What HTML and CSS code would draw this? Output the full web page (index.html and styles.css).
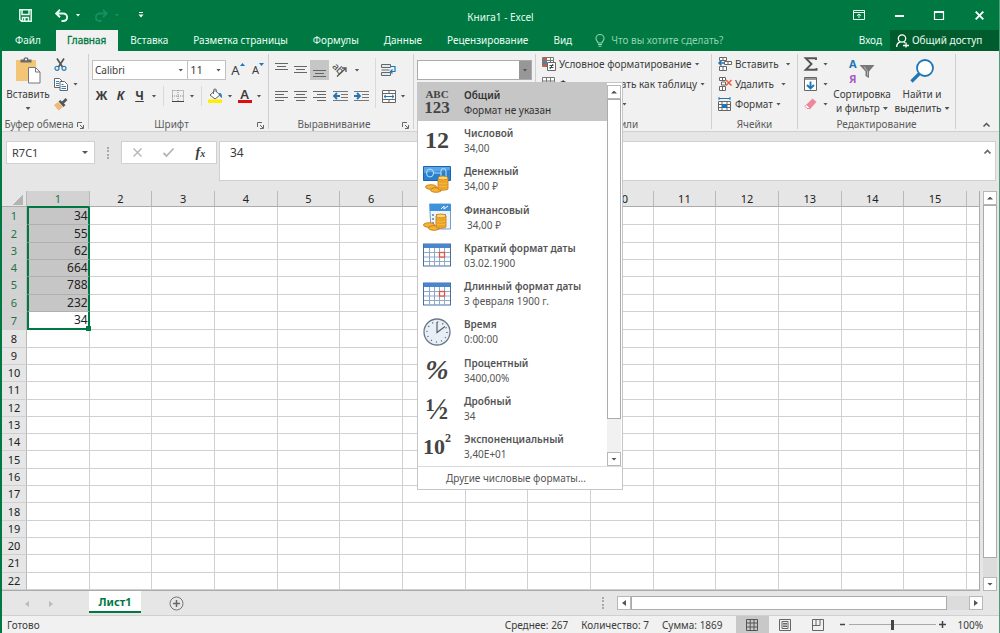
FILE: index.html
```html
<!DOCTYPE html>
<html lang="ru">
<head>
<meta charset="utf-8">
<meta name="viewport" content="width=device-width, initial-scale=1">
<title>Книга1 - Excel</title>
<link rel="stylesheet" href="styles.css">
</head>
<body>
<svg class="defs" aria-hidden="true">
  <symbol id="i-launch" viewBox="0 0 7 7"><path d="M.5 5V.5H5M3 3l3 3M6.500 3v3.500H3" fill="none" stroke="#666"/></symbol>
  <symbol id="i-cal" viewBox="0 0 28 24"><rect x=".5" y="1" width="27" height="22" fill="#fff" stroke="#4a6f9f"/><rect x="1" y="1" width="26" height="4" fill="#4a86cf"/><path d="M1 9.500h26M1 14h26M1 18.500h26M6.500 5v18M11.500 5v18M16.500 5v18M21.500 5v18" stroke="#8ba9cf" fill="none"/><rect x="16.500" y="9.500" width="5" height="4.500" fill="#fff" stroke="#e0563c" stroke-width="1.300"/></symbol>
  <symbol id="i-coins" viewBox="0 0 26 18"><g fill="#f7b334" stroke="#bd7415" stroke-width=".8"><ellipse cx="7" cy="12" rx="5.500" ry="2.300"/><ellipse cx="12" cy="15" rx="5.500" ry="2.300"/><path d="M14 3v11c0 1.500 10 1.500 10 0V3z"/><path d="M14 6c0 1.500 10 1.500 10 0M14 9c0 1.500 10 1.500 10 0M14 12c0 1.500 10 1.500 10 0" fill="none" stroke="#d98e1c"/><ellipse cx="19" cy="3" rx="5" ry="2" fill="#ffd772"/></g></symbol>
  <symbol id="i-left" viewBox="0 0 13 12"><path d="M0 1.500h13M0 4.500h9M0 7.500h13M0 10.500h9" stroke="#666"/></symbol>
  <symbol id="i-center" viewBox="0 0 13 12"><path d="M0 1.500h13M2 4.500h9M0 7.500h13M2 10.500h9" stroke="#666"/></symbol>
  <symbol id="i-right" viewBox="0 0 13 12"><path d="M0 1.500h13M4 4.500h9M0 7.500h13M4 10.500h9" stroke="#666"/></symbol>
</svg>

<div class="app">
  <header class="titlebar">
    <div class="quick">
      <button class="q-save" aria-label="Сохранить"><svg width="13" height="13" viewBox="0 0 13 13"><path d="M.8.8h11.400v11.400H2.500L.8 10.500zM3 1v4.500h7V1M3.500 12V8.500h6V12" fill="none" stroke="#e6fff3" stroke-width="1.500"/><path d="M5 9h1.500v3H5z" fill="#e6fff3"/></svg></button>
      <button class="q-undo" aria-label="Отменить"><svg width="14" height="13" viewBox="0 0 14 13"><path d="M5 .8L1.200 4.500 5 8.200M1.500 4.500H8c5.500 0 5.500 7.500 0 7.500H6.500" fill="none" stroke="#e6fff3" stroke-width="1.900"/></svg></button>
      <button class="q-drop" aria-label="Список отмены"><i class="caret"></i></button>
      <button class="q-redo" aria-label="Вернуть"><svg width="14" height="13" viewBox="0 0 14 13"><path d="M9 .8l3.800 3.700L9 8.200M12.500 4.500H6c-5.500 0-5.500 7.500 0 7.500h1.500" fill="none" stroke="#169063" stroke-width="1.800"/></svg></button>
      <button class="q-drop dim" aria-label="Список возврата"><i class="caret"></i></button>
      <button class="q-more" aria-label="Настройка панели"><svg width="6" height="6" viewBox="0 0 6 6"><path d="M1 .5h4" stroke="#fff"/><path d="M.5 2.500h5L3 5.500z" fill="#fff"/></svg></button>
    </div>
    <h1>Книга1 - Excel</h1>
    <div class="window-buttons">
      <button aria-label="Параметры ленты"><svg width="12" height="10" viewBox="0 0 12 10"><path d="M.5.5h11v9H.5zM1 2.500h10M6 8V4M4 5.700L6 4l2 1.700" fill="none" stroke="#e8fff4"/></svg></button>
      <button aria-label="Свернуть"><svg width="9" height="10" viewBox="0 0 9 10"><path d="M0 6h9" stroke="#fff" stroke-width="2"/></svg></button>
      <button aria-label="Развернуть"><svg width="10" height="9" viewBox="0 0 10 9"><path d="M.5.500h9v8h-9zM0 1.500h10" fill="none" stroke="#fff" stroke-width="1.200"/></svg></button>
      <button aria-label="Закрыть"><svg width="9" height="9" viewBox="0 0 9 9"><path d="M.7.7l7.600 7.600M8.300.7L.7 8.300" stroke="#fff" stroke-width="1.900"/></svg></button>
    </div>
  </header>

  <nav class="tabs">
    <a href="#file" class="tab file">Файл</a>
    <a href="#home" class="tab active" aria-current="page">Главная</a>
    <a href="#insert" class="tab">Вставка</a>
    <a href="#layout" class="tab">Разметка страницы</a>
    <a href="#formulas" class="tab">Формулы</a>
    <a href="#data" class="tab">Данные</a>
    <a href="#review" class="tab">Рецензирование</a>
    <a href="#view" class="tab">Вид</a>
    <button class="tellme"><svg width="10" height="13" viewBox="0 0 10 13"><path d="M3 9C3 7.500 1 6.500 1 4.500a4 4 0 018 0C9 6.500 7 7.500 7 9zM3 10.500h4M3.500 12.300h3" fill="none" stroke="#8fd3b0" stroke-width="1.100"/></svg>Что вы хотите сделать?</button>
    <a href="#login" class="login">Вход</a>
    <button class="share"><svg width="13" height="14" viewBox="0 0 13 14"><circle cx="6" cy="4.500" r="3.700" fill="none" stroke="#fff" stroke-width="1.300"/><path d="M.7 13c0-3 1.500-4.500 3.500-5M8 8l1 1M7 11.500h6M10 8.500v5" fill="none" stroke="#fff" stroke-width="1.300"/></svg>Общий доступ</button>
  </nav>

  <section class="ribbon" aria-label="Лента">
    <div class="group g-clip">
      <div class="body">
        <button class="big paste"><svg width="26" height="27" viewBox="0 0 26 27"><path d="M1 3h20v21H1z" fill="#f3c577"/><path d="M5.500 5.500v-3h3C8.500-.5 13.500-.5 13.500 2.500h3v3z" fill="#6a6a6a"/><circle cx="11" cy="2.500" r="1" fill="#fff"/><path d="M13.500 10.500h7l4.500 4.500v11H13.500z" fill="#fff" stroke="#777"/><path d="M20.500 10.500V15H25" fill="none" stroke="#777"/></svg><span>Вставить</span><i class="caret"></i></button>
        <div class="stack">
          <button aria-label="Вырезать"><svg width="13" height="13" viewBox="0 0 13 13"><path d="M3 .5l5.500 8.500M10 .5L4.500 9" stroke="#555" stroke-width="1.700"/><circle cx="3" cy="10.300" r="2" fill="none" stroke="#2f7fb8" stroke-width="1.200"/><circle cx="10" cy="10.300" r="2" fill="none" stroke="#2f7fb8" stroke-width="1.200"/></svg></button>
          <button aria-label="Копировать"><svg width="14" height="13" viewBox="0 0 14 13"><path d="M.5.500h5L8 3v6.500H.5z" fill="#fff" stroke="#666"/><path d="M2 3.500h3M2 5.500h3M2 7.500h3" stroke="#2f7fb8"/><path d="M6 3.500h4.500l3 3v6H6z" fill="#fff" stroke="#666"/><path d="M7.500 6.500h2M7.500 8.500h4.500M7.500 10.500h4.500" stroke="#2f7fb8"/></svg><i class="caret"></i></button>
          <button aria-label="Формат по образцу"><svg width="14" height="13" viewBox="0 0 14 13"><path d="M0 7l4-3 5 5-4.500 3.500z" fill="#f0b878"/><path d="M4.500 3.500L6.300 2l5.200 5L9.500 9z" fill="#555"/><path d="M8.500 5L12.500 1" stroke="#555" stroke-width="2.600"/></svg></button>
        </div>
      </div>
      <footer>Буфер обмена<button class="launch" aria-label="Параметры буфера"><svg width="7" height="7"><use href="#i-launch"/></svg></button></footer>
    </div>

    <div class="group g-font">
      <div class="body rows">
        <div class="row">
          <span class="combo font-name"><select aria-label="Шрифт"><option>Calibri</option></select><i class="caret"></i></span>
          <span class="combo font-size"><select aria-label="Размер шрифта"><option>11</option></select><i class="caret"></i></span>
          <button class="tool grow first-grow" aria-label="Увеличить размер"><span>A</span><svg width="5" height="3" viewBox="0 0 5 3"><path d="M0 3L2.500 0 5 3z" fill="#2076b4"/></svg></button>
          <button class="tool grow small" aria-label="Уменьшить размер"><span>A</span><svg width="5" height="3" viewBox="0 0 5 3"><path d="M0 0L2.500 3 5 0z" fill="#2076b4"/></svg></button>
        </div>
        <div class="row">
          <button class="tool bold">Ж</button>
          <button class="tool bold italic">К</button>
          <button class="tool bold under">Ч</button>
          <button class="drop" aria-label="Подчёркивание"><i class="caret"></i></button>
          <i class="vsep"></i>
          <button class="tool" aria-label="Границы"><svg width="12" height="12" viewBox="0 0 12 12"><path d="M.5.500h11v11M.5.500v11M6 0v11M0 6h12" fill="none" stroke="#888" stroke-dasharray="1 1"/><path d="M0 11.500h12" stroke="#444"/></svg></button>
          <button class="drop" aria-label="Виды границ"><i class="caret"></i></button>
          <i class="vsep"></i>
          <button class="tool" aria-label="Заливка"><svg width="15" height="14" viewBox="0 0 15 14"><path d="M2 6l5-4.500L12 6l-5 4z" fill="#fff" stroke="#666"/><path d="M5.500 5V1.500a1.500 1.500 0 013 0V3" fill="none" stroke="#666"/><path d="M11 4c3 0 3 2 3 5-1.500-.5-2-2-3-3z" fill="#2f7fb8"/><path d="M0 10.500h14V14H0z" fill="#ffee00"/></svg></button>
          <button class="drop" aria-label="Цвет заливки"><i class="caret"></i></button>
          <button class="tool" aria-label="Цвет шрифта"><span class="fontcolor">A</span></button>
          <button class="drop" aria-label="Выбор цвета"><i class="caret"></i></button>
        </div>
      </div>
      <footer>Шрифт<button class="launch" aria-label="Параметры шрифта"><svg width="7" height="7"><use href="#i-launch"/></svg></button></footer>
    </div>

    <div class="group g-align">
      <div class="body">
        <div class="rows">
          <div class="row">
            <button class="tool" aria-label="По верхнему краю"><svg width="13" height="18" viewBox="0 0 13 18"><path d="M0 2.500h13M2 5.500h9M0 8.500h13" stroke="#666"/></svg></button>
            <button class="tool" aria-label="По середине"><svg width="13" height="18" viewBox="0 0 13 18"><path d="M0 5.500h13M2 8.500h9M0 11.500h13" stroke="#666"/></svg></button>
            <button class="tool pressed" aria-pressed="true" aria-label="По нижнему краю"><svg width="13" height="18" viewBox="0 0 13 18"><path d="M0 9.500h13M2 12.500h9M0 15.500h13" stroke="#666"/></svg></button>
            <button class="tool wide" aria-label="Ориентация"><svg width="15" height="14" viewBox="0 0 15 14"><text x="-1" y="9" transform="rotate(45 5 6)" class="ab">ab</text><path d="M4 13.500L12 6M13 9V5H9" fill="none" stroke="#555" stroke-width="1.300"/></svg></button>
            <button class="drop" aria-label="Виды ориентации"><i class="caret"></i></button>
          </div>
          <div class="row">
            <button class="tool" aria-label="По левому краю"><svg width="13" height="12"><use href="#i-left"/></svg></button>
            <button class="tool" aria-label="По центру"><svg width="13" height="12"><use href="#i-center"/></svg></button>
            <button class="tool" aria-label="По правому краю"><svg width="13" height="12"><use href="#i-right"/></svg></button>
            <button class="tool wide" aria-label="Уменьшить отступ"><svg width="15" height="12" viewBox="0 0 15 12"><path d="M0 1.500h15M8 4.500h7M8 7.500h7M0 10.500h15" stroke="#777"/><path d="M7 6H1.500M4 3L1 6l3 3" fill="none" stroke="#2076b4" stroke-width="1.800"/></svg></button>
            <button class="tool" aria-label="Увеличить отступ"><svg width="15" height="12" viewBox="0 0 15 12"><path d="M0 1.500h15M8 4.500h7M8 7.500h7M0 10.500h15" stroke="#777"/><path d="M0 6h5.500M3 3l3 3-3 3" fill="none" stroke="#2076b4" stroke-width="1.800"/></svg></button>
          </div>
        </div>
        <i class="vsep tall"></i>
        <div class="rows">
          <div class="row">
            <button class="tool" aria-label="Перенести текст"><svg width="15" height="14" viewBox="0 0 15 14"><path d="M.5 1.500h9v3h-9zM.5 9.500h9v3h-9zM.5 7h8" fill="#dcecf7" stroke="#666"/><path d="M9 3.500h5v5H9.500M11.500 6.500l-2 2 2 2" fill="none" stroke="#2076b4" stroke-width="1.200"/></svg></button>
          </div>
          <div class="row">
            <button class="tool" aria-label="Объединить"><svg width="14" height="13" viewBox="0 0 14 13"><path d="M.5.500h13v12H.5zM.5 3.500h13M.5 9.500h13M7 .5v3M7 9.500v3" fill="#fff" stroke="#666"/><path d="M2 6.500h10M4 4.800L2 6.500l2 1.700M10 4.800l2 1.700-2 1.700" fill="none" stroke="#2076b4"/></svg></button>
            <button class="drop" aria-label="Виды объединения"><i class="caret"></i></button>
          </div>
        </div>
      </div>
      <footer>Выравнивание<button class="launch" aria-label="Параметры выравнивания"><svg width="7" height="7"><use href="#i-launch"/></svg></button></footer>
    </div>

    <div class="group g-number">
      <div class="body rows">
        <div class="format-box">
          <input type="text" aria-label="Числовой формат">
          <button aria-label="Открыть список форматов" aria-expanded="true"><i class="caret"></i></button>
        </div>
      </div>
      <div class="format-menu">
        <div class="format-scroll">
          <ul role="listbox" aria-label="Числовые форматы">
            <li role="option" aria-selected="true" class="selected"><span class="pic abc">ABC<span>123</span></span><span><b>Общий</b><small>Формат не указан</small></span></li>
            <li role="option"><span class="pic num">12</span><span><b>Числовой</b><small>34,00</small></span></li>
            <li role="option"><span class="pic"><svg width="28" height="28" viewBox="0 0 28 28"><path d="M.5 1.500h27v14H.5z" fill="#2a7fd0" stroke="#1d62aa"/><path d="M1 2h26v3L1 8z" fill="#58a6e6"/><ellipse cx="7" cy="8" rx="3.500" ry="4" fill="none" stroke="#b9e0fa"/><path d="M10 8h8M18 12V6a2.500 2.500 0 015 0v6" fill="none" stroke="#b9e0fa"/><use href="#i-coins" x="1" y="10" width="26" height="18"/></svg></span><span><b>Денежный</b><small>34,00 ₽</small></span></li>
            <li role="option"><span class="pic"><svg width="28" height="28" viewBox="0 0 28 28"><path d="M6.500 1h21v25H8z" fill="#eef4fb" stroke="#6f9fd0"/><path d="M7 1h21v7H7z" fill="#3e92dc"/><path d="M18 6l3-3v3l4-3" fill="none" stroke="#fff"/><path d="M9 12h16M9 16h16M9 20h16" stroke="#8a9bb0" stroke-width="2" stroke-dasharray="2 2"/><use href="#i-coins" x="-1" y="10" width="26" height="18"/></svg></span><span><b>Финансовый</b><small class="indent">34,00 ₽</small></span></li>
            <li role="option"><span class="pic"><svg width="28" height="24"><use href="#i-cal"/></svg></span><span><b>Краткий формат даты</b><small>03.02.1900</small></span></li>
            <li role="option"><span class="pic"><svg width="28" height="24"><use href="#i-cal"/></svg></span><span><b>Длинный формат даты</b><small>3 февраля 1900 г.</small></span></li>
            <li role="option"><span class="pic"><svg width="28" height="28" viewBox="0 0 28 28"><circle cx="14" cy="14" r="13" fill="#e9eff6" stroke="#69788a" stroke-width="1.300"/><circle cx="14" cy="14" r="10" fill="none" stroke="#5e6b7c" stroke-width="1.500" stroke-dasharray="1 4.236"/><path d="M14 4v10.500l8-6" fill="none" stroke="#56606e" stroke-width="1.200"/></svg></span><span><b>Время</b><small>0:00:00</small></span></li>
            <li role="option"><span class="pic pct">%</span><span><b>Процентный</b><small>3400,00%</small></span></li>
            <li role="option"><span class="pic half">½</span><span><b>Дробный</b><small>34</small></span></li>
            <li role="option"><span class="pic exp">10<sup>2</sup></span><span><b>Экспоненциальный</b><small>3,40E+01</small></span></li>
          </ul>
          <div class="vscroll">
            <button aria-label="Вверх"><i class="caret up"></i></button>
            <div class="thumb"></div><div class="rest menu-rest"></div>
            <button aria-label="Вниз"><i class="caret"></i></button>
          </div>
        </div>
        <button class="more-formats"><span>Дру<u>г</u>ие числовые форматы...</span></button>
      </div>
    </div>

    <div class="group g-styles">
      <div class="body lines">
        <button><svg width="14" height="14" viewBox="0 0 14 14"><path d="M.5.500h11v9H.5zM.5 3.500h11M.5 6.500h11M4.500.500v9M8.500.500v9" fill="#fff" stroke="#777"/><path d="M1 1h3.500v2.500H1zM1 7h3v2.500H1z" fill="#d5583a"/><path d="M1 4h3v2.500H1z" fill="#3f83bd"/><path d="M5.500 5.500h8v8h-8z" fill="#fff" stroke="#666"/><path d="M7.500 8.500h4M7.500 10.500h4M11 7l-3 5" stroke="#444"/></svg>Условное форматирование<i class="caret"></i></button>
        <button><svg width="14" height="14" viewBox="0 0 14 14"><path d="M.5.500h12v11H.5zM.5 4h12M.5 7.500h12M4.500.500v11M8.500.500v11" fill="#fff" stroke="#777"/></svg>Форматировать как таблицу<i class="caret"></i></button>
        <button><svg width="14" height="14" viewBox="0 0 14 14"><path d="M.5.500h12v11H.5zM.5 4h12M4.500.500v11" fill="#fff" stroke="#777"/></svg>Стили ячеек<i class="caret"></i></button>
      </div>
      <footer>Стили</footer>
    </div>

    <div class="group g-cells">
      <div class="body lines">
        <button><svg width="14" height="14" viewBox="0 0 14 14"><path d="M1.500.500h7v3h-7zM5 .5v3M1.500 9.500h7v4h-7zM5 9.500v4M6.500 4.500h7v3h-7zM10 4.500v3" fill="#fff" stroke="#666"/><path d="M6 6H1M3.500 3.500L1 6l2.500 2.500" fill="none" stroke="#2076b4" stroke-width="1.500"/></svg>Вставить<i class="caret far"></i></button>
        <button><svg width="14" height="14" viewBox="0 0 14 14"><path d="M1.500.500h6v3h-6zM4.500.500v3M1.500 9.500h6v4h-6zM4.500 9.500v4M3.500 5h4v3h-4z" fill="#fff" stroke="#666"/><path d="M8 3l5.500 5.500M13.500 3L8 8.500" stroke="#e2603f" stroke-width="1.500"/></svg>Удалить<i class="caret far"></i></button>
        <button><svg width="14" height="14" viewBox="0 0 14 14"><path d="M1 1.500h11M1 0v3M12 0v3" stroke="#2076b4"/><path d="M.5 4.500h12v9H.5zM.5 7.500h12M.5 10.500h12M4 4.500v9M9 4.500v9" fill="#fff" stroke="#666"/><path d="M4 7h5v4H4z" fill="#2076b4"/></svg>Формат<i class="caret"></i></button>
      </div>
      <footer>Ячейки</footer>
    </div>

    <div class="group g-edit">
      <div class="body">
        <div class="lines icons">
          <button aria-label="Сумма"><svg width="14" height="14" viewBox="0 0 14 14"><path d="M12 3V1.200H1.700L7.500 7l-5.800 5.800H12.500V11" fill="none" stroke="#555" stroke-width="1.900"/></svg><i class="caret"></i></button>
          <button aria-label="Заполнить"><svg width="13" height="14" viewBox="0 0 13 14"><path d="M.5.500h12v13H.5z" fill="#fff" stroke="#666"/><path d="M1 1h11v2H1z" fill="#999"/><path d="M6.500 4.500v7M3 8l3.500 3.500L10 8" fill="none" stroke="#2076b4" stroke-width="1.900"/></svg><i class="caret"></i></button>
          <button aria-label="Очистить"><svg width="13" height="12" viewBox="0 0 13 12"><path d="M2.500 6.500L8.500.500l4 3.500-6 6.500z" fill="#f0869a"/><path d="M2.500 6.500l4 4H3L1 8.500z" fill="#fff" stroke="#f0869a"/></svg><i class="caret"></i></button>
        </div>
        <button class="big sort"><svg width="26" height="26" viewBox="0 0 26 26"><text x="0" y="10" class="sort-a">А</text><text x="0" y="25" class="sort-z">Я</text><path d="M10.500 7h15l-5.500 6.500V20l-3.500-2v-4.500z" fill="#777"/><path d="M15 8.500l3.500 5v4" fill="none" stroke="#bbb"/></svg><span>Сортировка<br>и фильтр<i class="caret"></i></span></button>
        <button class="big find"><svg width="24" height="26" viewBox="0 0 24 26"><circle cx="15" cy="10" r="8" fill="#fff" stroke="#2076b4" stroke-width="1.800"/><path d="M9.500 15.500L1.500 23.500" stroke="#2076b4" stroke-width="3.200"/></svg><span>Найти и<br>выделить<i class="caret"></i></span></button>
      </div>
      <footer>Редактирование</footer>
    </div>
    <button class="collapse" aria-label="Свернуть ленту"><svg width="7" height="5" viewBox="0 0 7 5"><path d="M.5 4.500l3-3 3 3" fill="none" stroke="#555" stroke-width="1.500"/></svg></button>
  </section>

  <section class="formula" aria-label="Строка формул">
    <div class="namebox"><input type="text" value="R7C1" aria-label="Имя"><button aria-label="Список имён"><i class="caret"></i></button></div>
    <i class="dots"></i>
    <div class="fx">
      <button aria-label="Отмена"><svg width="9" height="9" viewBox="0 0 9 9"><path d="M.5.500l8 8M8.500.500l-8 8" stroke="#b5b5b5" stroke-width="1.400"/></svg></button>
      <button aria-label="Ввод"><svg width="11" height="9" viewBox="0 0 11 9"><path d="M.5 5l3 3L10.500.500" fill="none" stroke="#b5b5b5" stroke-width="1.800"/></svg></button>
      <button class="fx-btn" aria-label="Вставить функцию"><span>f</span><small>x</small></button>
    </div>
    <div class="entry"><input type="text" value="34" aria-label="Формула"><button aria-label="Развернуть строку формул"><svg width="7" height="5" viewBox="0 0 7 5"><path d="M.5 4.500l3-3 3 3" fill="none" stroke="#666" stroke-width="1.700"/></svg></button></div>
  </section>

  <main class="sheet">
    <table id="grid"></table>
    <div class="vscroll sheet-scroll">
      <button aria-label="Вверх"><i class="caret up"></i></button>
      <div class="thumb"></div><div class="rest"></div>
      <button aria-label="Вниз"><i class="caret"></i></button>
    </div>
  </main>

  <div class="sheetbar">
    <button class="nav" aria-label="Предыдущий лист"><i class="caret left"></i></button>
    <button class="nav" aria-label="Следующий лист"><i class="caret right"></i></button>
    <a href="#sheet1" class="sheet-tab">Лист1</a>
    <button class="add" aria-label="Новый лист"><svg width="15" height="15" viewBox="0 0 15 15"><circle cx="7.500" cy="7.500" r="6.500" fill="none" stroke="#777"/><path d="M7.500 4v7M4 7.500h7" stroke="#666" stroke-width="1.500"/></svg></button>
    <i class="dots"></i>
    <div class="hscroll">
      <button aria-label="Влево"><i class="caret left"></i></button>
      <div class="thumb"></div><div class="rest"></div>
      <button aria-label="Вправо"><i class="caret right"></i></button>
    </div>
  </div>

  <footer class="status">
    <span class="ready">Готово</span>
    <span>Среднее: 267</span><span>Количество: 7</span><span>Сумма: 1869</span>
    <div class="views">
      <button class="on" aria-label="Обычный"><svg width="12" height="12" viewBox="0 0 12 12"><path d="M.5.500h11v11H.5zM.5 4h11M.5 8h11M4.200.500v11M8 .5v11" fill="none" stroke="#555"/></svg></button>
      <button aria-label="Разметка страницы"><svg width="12" height="12" viewBox="0 0 12 12"><path d="M.5.500h11v11H.5zM3 2.500h6v7H3zM4 4.500h4M4 6h4M4 7.500h4" fill="none" stroke="#666"/></svg></button>
      <button aria-label="Страничный"><svg width="12" height="12" viewBox="0 0 12 12"><path d="M.5.500h11v11H.5zM4 1v5.500h4V1M.5 6.500H4" fill="none" stroke="#666"/></svg></button>
    </div>
    <div class="zoom">
      <button aria-label="Уменьшить"><svg width="7" height="7" viewBox="0 0 7 7"><path d="M1 3.500h5" stroke="#444" stroke-width="1.500"/></svg></button>
      <input type="range" min="0" max="100" value="50" aria-label="Масштаб">
      <button aria-label="Увеличить"><svg width="7" height="7" viewBox="0 0 7 7"><path d="M0 3.500h7M3.500 0v7" stroke="#444" stroke-width="1.500"/></svg></button>
    </div>
    <span class="percent">100%</span>
  </footer>
</div>
<script src="grid.js"></script>
</body>
</html>
```
FILE: grid.js
```js
const COLS = 15;
const ROWS = 22;
const values = [34, 55, 62, 664, 788, 232, 34];

const cells = (n, make) => Array.from({ length: n }, (_, i) => make(i + 1)).join('');

const cols = '<colgroup><col class="c-head">' + cells(COLS, () => '<col>') + '<col class="c-last"></colgroup>';

const head = '<thead><tr><th class="corner"></th>' +
  cells(COLS, (c) => `<th scope="col"${c === 1 ? ' class="sel"' : ''}>${c}</th>`) +
  '<th></th></tr></thead>';

const body = '<tbody>' + cells(ROWS, (r) => {
  const filled = r <= values.length;
  const kind = !filled ? '' : r === values.length ? 'range current' : r === 1 ? 'range first' : 'range';
  return `<tr><th scope="row"${filled ? ' class="sel"' : ''}>${r}</th>` +
    cells(COLS, (c) => c === 1 && filled ? `<td class="${kind}">${values[r - 1]}</td>` : '<td></td>') +
    '<td></td></tr>';
}) + '</tbody>';

document.getElementById('grid').innerHTML = cols + head + body;
```
FILE: styles.css
```css
:root {
  --green: #007842;
  --panel: #f1f1f1;
  --band: #e6e6e6;
  --line: #d0d0d0;
  --ink: #3c3c3c;
}

* { box-sizing: border-box; }

body {
  margin: 0;
  color: var(--ink);
  font: 10px/14px "Noto Sans", "Open Sans", sans-serif;
}

button, input, select {
  margin: 0;
  padding: 0;
  border: 0;
  border-radius: 0;
  background: none;
  color: inherit;
  font: inherit;
}

a { color: inherit; text-decoration: none; }
svg { display: block; flex: none; overflow: visible; }
.defs { position: absolute; width: 0; height: 0; }

.app {
  display: flex;
  flex-direction: column;
  height: 100vh;
  min-height: 560px;
  border-left: 2px solid var(--green);
  border-right: 1px solid #4f9c79;
  background: var(--band);
}

.caret {
  display: inline-block;
  flex: none;
  width: 5px;
  height: 3px;
  background: #555;
  clip-path: polygon(0 0, 100% 0, 50% 100%);
}
.caret.up { clip-path: polygon(0 100%, 100% 100%, 50% 0); }
.caret.left { width: 4px; height: 6px; clip-path: polygon(100% 0, 100% 100%, 0 50%); }
.caret.right { width: 4px; height: 6px; clip-path: polygon(0 0, 0 100%, 100% 50%); }

/* Title bar */
.titlebar {
  display: grid;
  grid-template-columns: 1fr auto 1fr;
  align-items: center;
  flex: none;
  height: 30px;
  background: var(--green);
  color: #e6fff3;
}
.titlebar h1 { margin: 0; padding-top: 3px; font-size: 10px; font-weight: 400; }
.quick { display: flex; align-items: center; padding-left: 16px; }
.quick button { display: flex; align-items: center; justify-content: center; }
.quick .caret { background: #e6fff3; }
.quick .dim .caret { background: #169063; }
.q-save { width: 14px; margin-right: 23px; }
.q-undo, .q-redo { width: 14px; }
.q-drop { width: 18px; margin-right: 7px; }
.q-drop.dim { margin-right: 9px; }
.q-more { width: 12px; }
.window-buttons { display: flex; justify-content: flex-end; }
.window-buttons button { display: flex; align-items: center; justify-content: center; width: 40px; height: 28px; }

/* Ribbon tabs */
.tabs {
  display: flex;
  flex: none;
  height: 21px;
  background: var(--green);
  color: #e9fff5;
  line-height: 21px;
}
.tab { padding: 0 13px 0 12px; white-space: nowrap; }
.tab.file { width: 54px; padding: 0 2px 0 0; text-align: center; }
.tab.active { padding: 0 12px 0 11px; background: var(--panel); color: var(--green); -webkit-text-stroke: 0.3px; }
.tellme { display: flex; align-items: center; gap: 6px; padding-left: 10px; color: #8fd3b0; white-space: nowrap; }
.login { margin-left: auto; padding-right: 8px; }
.share { display: flex; align-items: center; gap: 3px; width: 109px; padding-left: 6px; background: #005c2c; white-space: nowrap; }

/* Ribbon */
.ribbon {
  display: flex;
  flex: none;
  height: 81px;
  padding-top: 3px;
  border-bottom: 1px solid var(--line);
  background: var(--panel);
}
.group {
  position: relative;
  display: flex;
  flex: none;
  flex-direction: column;
  height: 75px;
  border-right: 1px solid var(--line);
}
.g-clip { width: 87px; }
.g-font { width: 180px; }
.g-align { width: 145px; }
.g-number { width: 122px; }
.g-styles { width: 176px; }
.g-cells { width: 86px; }
.g-edit { width: 158px; }
.group .body { display: flex; flex: 1; }
.group > footer { flex: none; height: 12px; color: #5c5c5c; line-height: 14px; text-align: center; }
.g-clip > footer { padding-right: 12px; white-space: nowrap; }
.g-font > footer { padding-right: 14px; }
.g-align > footer { padding-right: 14px; }
.launch { position: absolute; right: 4px; bottom: 0; }

.big { display: flex; flex-direction: column; align-items: center; line-height: 14px; white-space: nowrap; }
.big .caret { margin-left: 3px; vertical-align: 2px; }
.paste { width: 52px; padding-top: 3px; gap: 3px; }
.paste .caret { margin: 3px 0 0; }
.stack { display: flex; flex-direction: column; }
.stack button { display: flex; align-items: center; gap: 5px; height: 20px; }

.body.rows { padding-left: 3px; }
.rows { display: flex; flex-direction: column; gap: 6px; padding-top: 6px; }
.row { display: flex; align-items: center; height: 20px; }
.tool { display: flex; flex: none; align-items: center; justify-content: center; width: 19px; height: 20px; }
.tool.wide { width: 23px; }
.drop { display: flex; flex: none; align-items: center; justify-content: center; width: 10px; height: 20px; }
.pressed { background: #c6c6c6; }
.vsep { flex: none; width: 1px; height: 20px; margin: 0 4px; background: #dadada; }
.vsep.tall { height: 50px; margin: 4px 3px 0 2px; }
.g-align .rows:first-child { width: 104px; padding-left: 3px; }
.g-align .body { padding: 0; }

.combo { position: relative; display: flex; align-items: center; height: 20px; border: 1px solid #c0c0c0; background: #fff; font-size: 11px; }
.combo select { width: 100%; height: 18px; padding-left: 2px; appearance: none; }
.combo .caret { position: absolute; right: 4px; pointer-events: none; }
.font-name { width: 97px; font-size: 10px; }
.font-size { width: 38px; border-left: 0; }
.grow { align-items: flex-start; width: 20px; font-size: 13px; line-height: 20px; }
.grow svg { margin-top: 3px; }
.first-grow { margin-left: 2px; }
.grow.small { font-size: 11px; }
.bold { font-size: 12px; font-weight: 700; }
.italic { font-style: italic; }
.under { text-decoration: underline; }
.fontcolor { width: 14px; height: 14px; border-bottom: 3px solid #e30b13; font-size: 13px; font-weight: 600; line-height: 10px; text-align: center; }
.ab { font: 10px "Noto Sans", sans-serif; fill: #444; }

.format-box { display: flex; width: 115px; height: 20px; border: 1px solid #ababab; background: #fff; }
.format-box input { flex: 1; min-width: 0; padding: 0 4px; }
.format-box button { display: flex; align-items: center; justify-content: center; width: 12px; background: #979797; }

.lines { flex-direction: column; padding: 0 0 0 6px; }
.lines button { display: flex; align-items: center; gap: 3px; height: 20px; white-space: nowrap; }
.g-edit .icons { display: flex; width: 34px; }
.icons button { justify-content: space-between; width: 24px; }
.caret.far { margin-left: 4px; }
.sort { width: 60px; padding-top: 4px; gap: 3px; }
.find { width: 60px; padding-top: 4px; gap: 3px; }
.sort-a { font: 700 11px "Noto Sans", sans-serif; fill: #2076b4; }
.sort-z { font: 700 11px "Noto Sans", sans-serif; fill: #a55cc0; }
.collapse { align-self: flex-end; margin: 0 9px 4px auto; }

/* Number format menu */
.format-menu {
  position: absolute;
  z-index: 5;
  top: 28px;
  left: 3px;
  width: 206px;
  border: 1px solid #c6c6c6;
  background: #fff;
  color: #555;
}
.format-scroll { display: flex; height: 383px; padding-right: 1px; }
.format-scroll ul { display: grid; flex: 1; grid-auto-rows: 1fr; margin: 0; padding: 0; list-style: none; }
.format-scroll li { display: grid; grid-template-columns: 38px 1fr; align-items: center; gap: 8px; white-space: nowrap; }
.format-scroll li.selected { background: #c6c6c6; color: #333; }
.format-scroll b { display: block; font-weight: 600; line-height: 15px; }
.format-scroll small { display: block; font-size: 10px; line-height: 14px; }
.format-scroll small.indent { padding-left: 3px; }
.pic { display: flex; justify-content: center; font-family: "Liberation Serif", serif; font-weight: 700; color: #444; }
.abc { flex-direction: column; align-items: center; font-size: 11px; line-height: 12px; }
.abc span { font-size: 17px; line-height: 16px; }
.num { font-size: 24px; }
.pct { font-size: 28px; font-style: italic; }
.half { font-size: 30px; }
.exp { font-size: 22px; }
.exp sup { margin-top: -4px; font-size: 12px; line-height: 4px; }
.format-menu .vscroll { margin-top: 2px; }
.more-formats { display: flex; align-items: center; justify-content: center; width: 100%; height: 23px; padding-right: 8px; border-top: 1px solid #dcdcdc; }

/* Scroll bars */
.vscroll { display: flex; flex-direction: column; width: 14px; background: var(--panel); }
.vscroll button, .hscroll button { display: flex; flex: none; align-items: center; justify-content: center; width: 14px; height: 14px; border: 1px solid #b8b8b8; background: #fff; }
.thumb { flex: 1; border: 1px solid #ababab; background: #fff; }
.vscroll .rest { flex: none; height: 19px; }
.vscroll .menu-rest { height: 33px; }
.vscroll .caret { width: 6px; }
.hscroll { display: flex; flex: 0 1 366px; height: 14px; background: #dcdcdc; }
.hscroll .rest { flex: none; width: 22px; }

/* Formula bar */
.formula { display: flex; flex: none; align-items: flex-start; padding: 9px 3px 10px 4px; }
.namebox, .fx { display: flex; height: 23px; border: 1px solid var(--line); background: #fff; }
.namebox { width: 89px; font-size: 11px; }
.namebox input { flex: 1; min-width: 0; padding-left: 5px; }
.namebox button { display: flex; align-items: center; justify-content: center; width: 18px; }
.namebox .caret { width: 6px; }
.dots { width: 2px; height: 12px; border-left: 2px dotted #aaa; }
.formula .dots { margin: 6px 12px; }
.fx { width: 96px; margin-right: 2px; }
.fx button { display: flex; flex: 1; align-items: center; justify-content: center; }
.fx .fx-btn { font: italic 700 14px/18px "Liberation Serif", serif; }
.fx-btn small { padding-top: 2px; font-size: 10px; }
.entry { display: flex; flex: 1; align-items: flex-start; height: 40px; border: 1px solid var(--line); background: #fff; }
.entry input { flex: 1; min-width: 0; height: 21px; padding-left: 10px; font-size: 12px; }
.entry button { padding: 7px 4px; }

/* Sheet */
.sheet { display: flex; flex: 1; gap: 3px; min-height: 0; padding-right: 2px; }
.sheet table { flex: 1; width: 0; height: 100%; border-collapse: separate; border-spacing: 0; border-right: 1px solid #ababab; border-bottom: 1px solid #ababab; background: #fff; table-layout: fixed; color: #222; font-size: 12px; line-height: 14px; }
.c-head { width: 25px; }
.c-last { width: 12px; }
.sheet th { padding: 0; border-right: 1px solid #b9b9b9; background: var(--band); font-weight: 400; }
.sheet thead th { height: 16px; border-bottom: 1px solid #ababab; font-size: 11px; }
.sheet thead th:last-child { border-right: 0; }
.sheet tbody th { border-bottom: 1px solid var(--line); font-size: 11px; }
.sheet th.sel { background: #d2d2d2; color: #217346; }
.sheet thead .sel { border-bottom-color: var(--green); }
.sheet .corner { background: linear-gradient(135deg, transparent 50%, #b4b4b4 50%) 11px 4px / 10px 10px no-repeat var(--band); }
.sheet td { padding: 0; border-right: 1px solid var(--line); border-bottom: 1px solid var(--line); text-align: right; }
.sheet td:last-child { border-right: 0; }
.sheet .range { position: relative; border-left: 2px solid var(--green); border-right: 2px solid var(--green); border-bottom-color: #b0b0b0; background: #c6c6c6; }
.sheet .first { border-top: 1px solid var(--green); }
.sheet .current { border-bottom: 2px solid var(--green); background: #fff; }
.current::after { content: ""; position: absolute; right: -3px; bottom: -3px; width: 5px; height: 5px; background: var(--green); }
.sheet-scroll { background: #dcdcdc; }

/* Sheet tabs */
.sheetbar { display: flex; flex: none; align-items: center; height: 24px; padding-right: 16px; }
.nav { width: 24px; }
.nav:first-child { margin-left: 13px; }
.nav .caret { background: #bbb; }
.sheet-tab { align-self: flex-start; width: 52px; height: 22px; margin-left: 26px; border-bottom: 2px solid var(--green); background: #fff; color: var(--green); font-size: 11px; font-weight: 700; line-height: 22px; text-align: center; }
.add { margin: 0 auto 0 28px; }
.sheetbar .dots { margin-right: 13px; }

/* Status bar */
.status { display: flex; flex: none; align-items: center; height: 18px; padding: 0 16px 0 5px; border-top: 1px solid var(--line); background: var(--panel); white-space: nowrap; }
.status > span { margin-right: 13px; }
.status .ready { margin-right: auto; }
.status .percent { margin-right: 0; }
.views { display: flex; height: 17px; }
.views button { display: flex; align-items: center; justify-content: center; width: 33px; }
.views .on { background: #c8c8c8; }
.zoom { display: flex; align-items: center; gap: 3px; margin: 0 12px 0 4px; }
.zoom input { width: 87px; height: 14px; appearance: none; background: linear-gradient(#aaa, #aaa) center / 100% 1px no-repeat; }
.zoom input::-webkit-slider-thumb { width: 3px; height: 10px; appearance: none; background: #444; }
```
